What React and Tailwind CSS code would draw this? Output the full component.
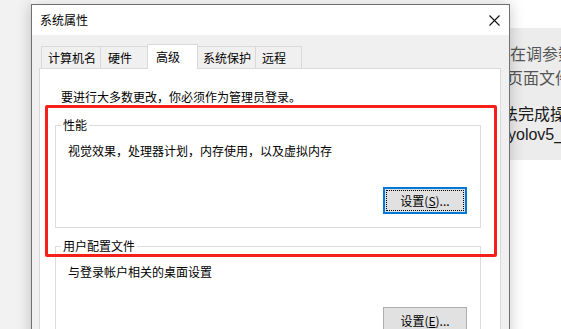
const tabs = [
  { label: '计算机名', w: 'w-[59px] pl-[6px] border-l' },
  { label: '硬件', w: 'w-[47px] pl-[7px] border-l' },
  { label: '高级', w: 'w-[51px] pl-[8px]', active: true },
  { label: '系统保护', w: 'w-[58px] pl-[5px] border-r' },
  { label: '远程', w: 'w-[46px] pl-[6px] border-r' },
]

function CloseIcon() {
  return (
    <svg width="11" height="11" viewBox="0 0 11 11" className="block">
      <path d="M0.5 0.5 L10.5 10.5 M10.5 0.5 L0.5 10.5" stroke="#111" strokeWidth="1.1" />
    </svg>
  )
}

function WinButton({ children, focused }) {
  return (
    <div
      className={
        focused
          ? 'h-[27px] w-[84px] border-2 border-[#0078d7] bg-[#e1e1e1] p-px'
          : 'h-[27px] w-[84px] border border-[#adadad] bg-[#e1e1e1]'
      }
    >
      <div
        className={
          focused
            ? 'flex h-full w-full items-center justify-center border border-dotted border-black text-[12px] leading-[16px]'
            : 'flex h-full w-full items-center justify-center text-[12px] leading-[16px]'
        }
      >
        {children}
      </div>
    </div>
  )
}

export default function App() {
  return (
    <div className="relative flex h-[329px] w-[561px] overflow-hidden bg-white font-['Noto_Sans_CJK_SC','Microsoft_YaHei',sans-serif] text-black">
      <div className="w-[31px] shrink-0 bg-[#f2f2f2]" />

      <div className="relative z-10 flex w-[479px] shrink-0 flex-col bg-white pt-[4px]">
        <div className="flex flex-1 flex-col border border-b-0 border-[#707070] shadow-[0_0_14px_rgba(0,0,0,0.22)]">
          <div className="flex h-[30px] items-center justify-between bg-white pl-[8px] pr-[9px]">
            <span className="text-[12px] leading-[16px]">系统属性</span>
            <CloseIcon />
          </div>

          <div className="flex flex-1 flex-col bg-[#f0f0f0] pl-[7px] pr-[8px] pt-[9px]">
            <div className="flex h-[24px] items-end pl-[2px]">
              {tabs.map((t) =>
                t.active ? (
                  <div
                    key={t.label}
                    className={`relative z-10 -mb-px flex h-[25px] items-center border border-b-0 border-[#d9d9d9] bg-white text-[12px] leading-[16px] ${t.w}`}
                  >
                    {t.label}
                  </div>
                ) : (
                  <div
                    key={t.label}
                    className={`flex h-[22px] items-center border-t border-[#d9d9d9] bg-[#f0f0f0] text-[12px] leading-[16px] ${t.w}`}
                  >
                    {t.label}
                  </div>
                )
              )}
            </div>

            <div className="flex-1 border border-b-0 border-[#d9d9d9] bg-white pt-[20px]">
              <p className="pl-[21px] text-[12px] leading-[16px]">要进行大多数更改，你必须作为管理员登录。</p>

              <fieldset className="ml-[15px] mr-[19px] mt-[12px] border border-[#dcdcdc] pb-[13px] pl-[12px] pr-[13px] pt-[10px]">
                <legend className="-ml-[7px] px-[2px] text-[12px] leading-[16px]">性能</legend>
                <p className="text-[12px] leading-[16px]">视觉效果，处理器计划，内存使用，以及虚拟内存</p>
                <div className="mt-[28px] flex justify-end">
                  <WinButton focused>
                    设置(<span className="underline">S</span>)...
                  </WinButton>
                </div>
              </fieldset>

              <fieldset className="ml-[15px] mr-[19px] mt-[10px] border border-[#dcdcdc] pb-[13px] pl-[12px] pr-[13px] pt-[10px]">
                <legend className="-ml-[7px] px-[2px] text-[12px] leading-[16px]">用户配置文件</legend>
                <p className="text-[12px] leading-[16px]">与登录帐户相关的桌面设置</p>
                <div className="mt-[27px] flex justify-end">
                  <WinButton>
                    设置(<span className="underline">E</span>)...
                  </WinButton>
                </div>
              </fieldset>
            </div>
          </div>
        </div>
      </div>

      <div className="flex-1 overflow-hidden bg-white">
        <div className="mt-[28px] h-[132px] bg-[#ececec] pt-[13px] text-[16px] whitespace-nowrap">
          <div className="leading-[24px] text-[#555]">在调参数</div>
          <div className="-ml-[3px] leading-[24px] text-[#555]">页面文件</div>
          <div className="-ml-[8px] mt-[13px] leading-[22px] text-[#1a1a1a]">法完成操</div>
          <div className="-ml-[2px] leading-[22px] text-[#1a1a1a] font-['Liberation_Sans',sans-serif]">yolov5_g</div>
        </div>
      </div>

      <div className="pointer-events-none absolute left-[45px] top-[105px] z-20 h-[152px] w-[452px] rounded-[2px] border-[3px] border-[#f5201a]" />
    </div>
  )
}
